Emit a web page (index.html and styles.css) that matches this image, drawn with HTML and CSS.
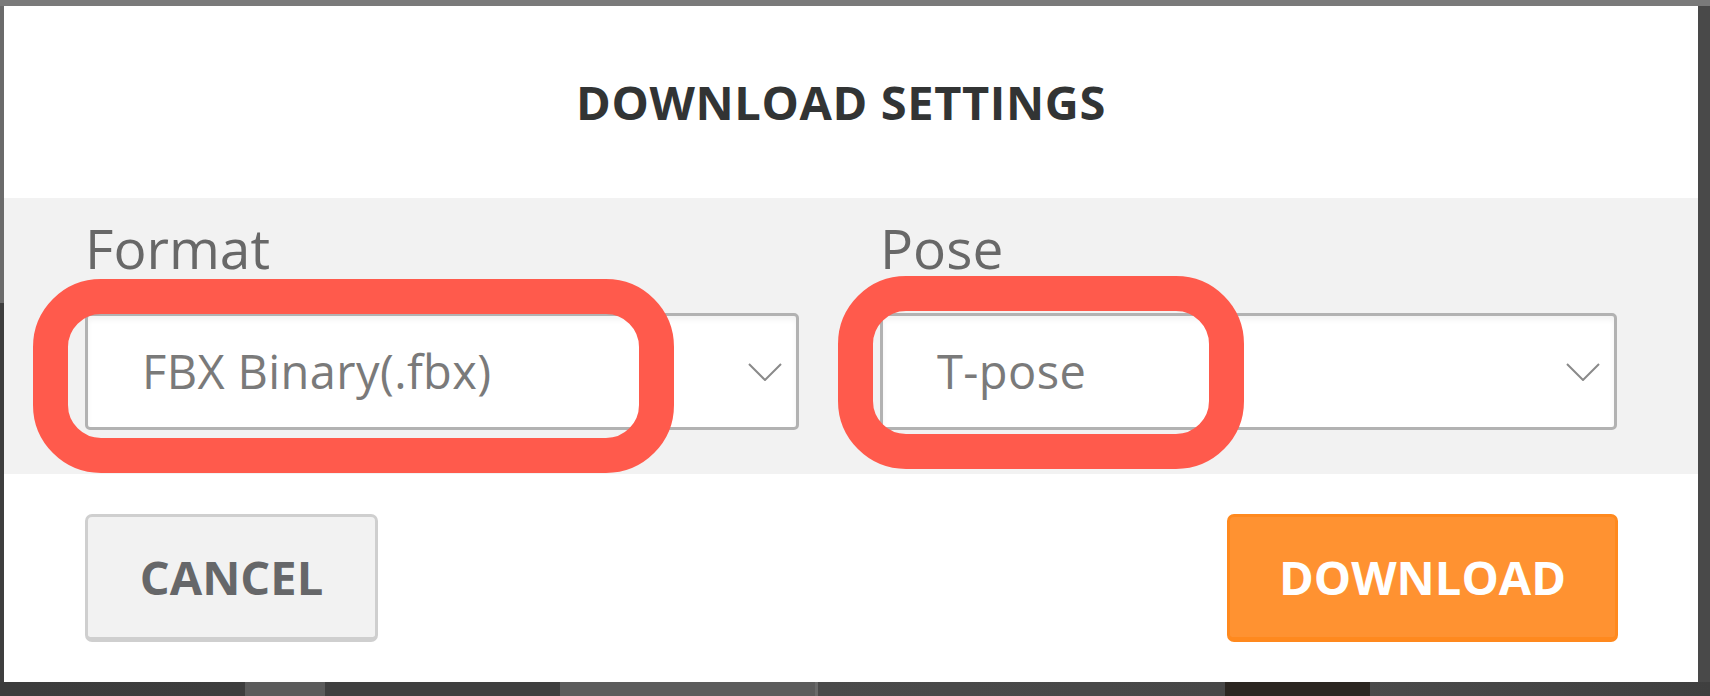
FILE: index.html
```html
<!DOCTYPE html>
<html lang="en">
<head>
<meta charset="utf-8">
<title>Download Settings</title>
<link rel="stylesheet" href="styles.css">
</head>
<body>
<div class="backdrop">
  <div class="modal">
    <header class="modal-header">
      <h1 class="modal-title">DOWNLOAD SETTINGS</h1>
    </header>
    <section class="modal-body">
      <div class="field field-format">
        <label class="field-label">Format</label>
        <div class="select">
          <span class="select-value">FBX Binary(.fbx)</span>
          <svg class="chevron" viewBox="0 0 34 18" width="34" height="18"><path d="M1 1 L17 17 L33 1" fill="none" stroke="#8a8a8a" stroke-width="2"/></svg>
          <span class="ring ring-format"></span>
        </div>
      </div>
      <div class="field field-pose">
        <label class="field-label">Pose</label>
        <div class="select">
          <span class="select-value">T-pose</span>
          <svg class="chevron" viewBox="0 0 34 18" width="34" height="18"><path d="M1 1 L17 17 L33 1" fill="none" stroke="#8a8a8a" stroke-width="2"/></svg>
          <span class="ring ring-pose"></span>
        </div>
      </div>
    </section>
    <footer class="modal-footer">
      <button class="btn btn-cancel">CANCEL</button>
      <button class="btn btn-download">DOWNLOAD</button>
    </footer>
  </div>
</div>
</body>
</html>
```
FILE: styles.css
```css
* { box-sizing: border-box; }
html, body { margin: 0; padding: 0; }
body {
  width: 1710px;
  height: 696px;
  overflow: hidden;
  font-family: "Open Sans", "Noto Sans", sans-serif;
  background-color: #474747;
}
.backdrop {
  width: 1710px;
  height: 696px;
  padding: 6px 12px 14px 4px;
  background:
    linear-gradient(#7a7a7a, #7a7a7a) 0 0 / 100% 6px no-repeat,
    linear-gradient(90deg, transparent 840px, #565656 840px, #565656 842px, transparent 842px) 0 0 / 100% 6px no-repeat,
    linear-gradient(#6b6b6b, #6b6b6b) 0 6px / 4px 297px no-repeat,
    linear-gradient(90deg, #3c3c3c 0, #3d3d3d 245px, #5b5b5b 245px, #5b5b5b 325px, #3f3f3f 325px, #3f3f3f 560px, #5c5c5c 560px, #5c5c5c 815px, #6a6a6a 815px, #6a6a6a 818px, #4a4a4a 818px, #474747 1225px, #2b2621 1225px, #2b2621 1370px, #4a4a4a 1370px, #3f3f3f 100%) 0 100% / 100% 14px no-repeat,
    linear-gradient(#3e3e3e, #3e3e3e) 0 303px / 4px 400px no-repeat,
    #494949;
}
.modal {
  background: #ffffff;
  width: 1694px;
  height: 676px;
  display: flex;
  flex-direction: column;
}
.modal-header {
  height: 192px;
  display: flex;
  align-items: center;
  justify-content: center;
  padding-right: 20px;
}
.modal-title {
  margin: 0;
  font-family: "Open Sans", sans-serif;
  font-weight: 700;
  font-size: 47px;
  line-height: 1;
  color: #323434;
  letter-spacing: 0.6px;
}
.modal-body {
  background: #f2f2f2;
  height: 276px;
  padding: 22px 81px 0 81px;
  display: flex;
  gap: 81px;
}
.field { display: flex; flex-direction: column; }
.field-format { width: 714px; }
.field-pose { flex: 1; }
.field-label {
  font-size: 55px;
  line-height: 56px;
  color: #686868;
  margin-bottom: 37px;
}
.select {
  position: relative;
  height: 117px;
  background: #ffffff;
  border: 3px solid #b2b2b2;
  border-radius: 5px;
  box-shadow: inset 0 4px 5px rgba(0,0,0,0.05);
  display: flex;
  align-items: center;
  justify-content: space-between;
  padding: 0 14px 0 54px;
}
.select-value {
  font-size: 47px;
  line-height: 1;
  color: #7a7a7a;
  letter-spacing: 0.4px;
}
.chevron { display: block; }
.ring {
  position: absolute;
  border: 35px solid #ff5a4c;
  border-radius: 68px;
  pointer-events: none;
}
.ring-format { left: -55px; top: -37px; width: 641px; height: 194px; }
.ring-pose { left: -45px; top: -40px; width: 406px; height: 193px; }
.modal-footer {
  padding: 40px 80px 0 81px;
  display: flex;
  justify-content: space-between;
  align-items: flex-start;
}
.btn {
  height: 128px;
  font-family: "Open Sans", sans-serif;
  font-weight: 700;
  font-size: 47px;
  line-height: 1;
  border-radius: 7px;
  border-style: solid;
  border-width: 3px 3px 5px 3px;
  padding: 0;
  cursor: pointer;
}
.btn-cancel {
  width: 293px;
  background: #f2f2f2;
  border-color: #cfcfcf;
  color: #666769;
}
.btn-download {
  width: 391px;
  background: #ff9231;
  border-color: #ff891e;
  color: #ffffff;
}
```
